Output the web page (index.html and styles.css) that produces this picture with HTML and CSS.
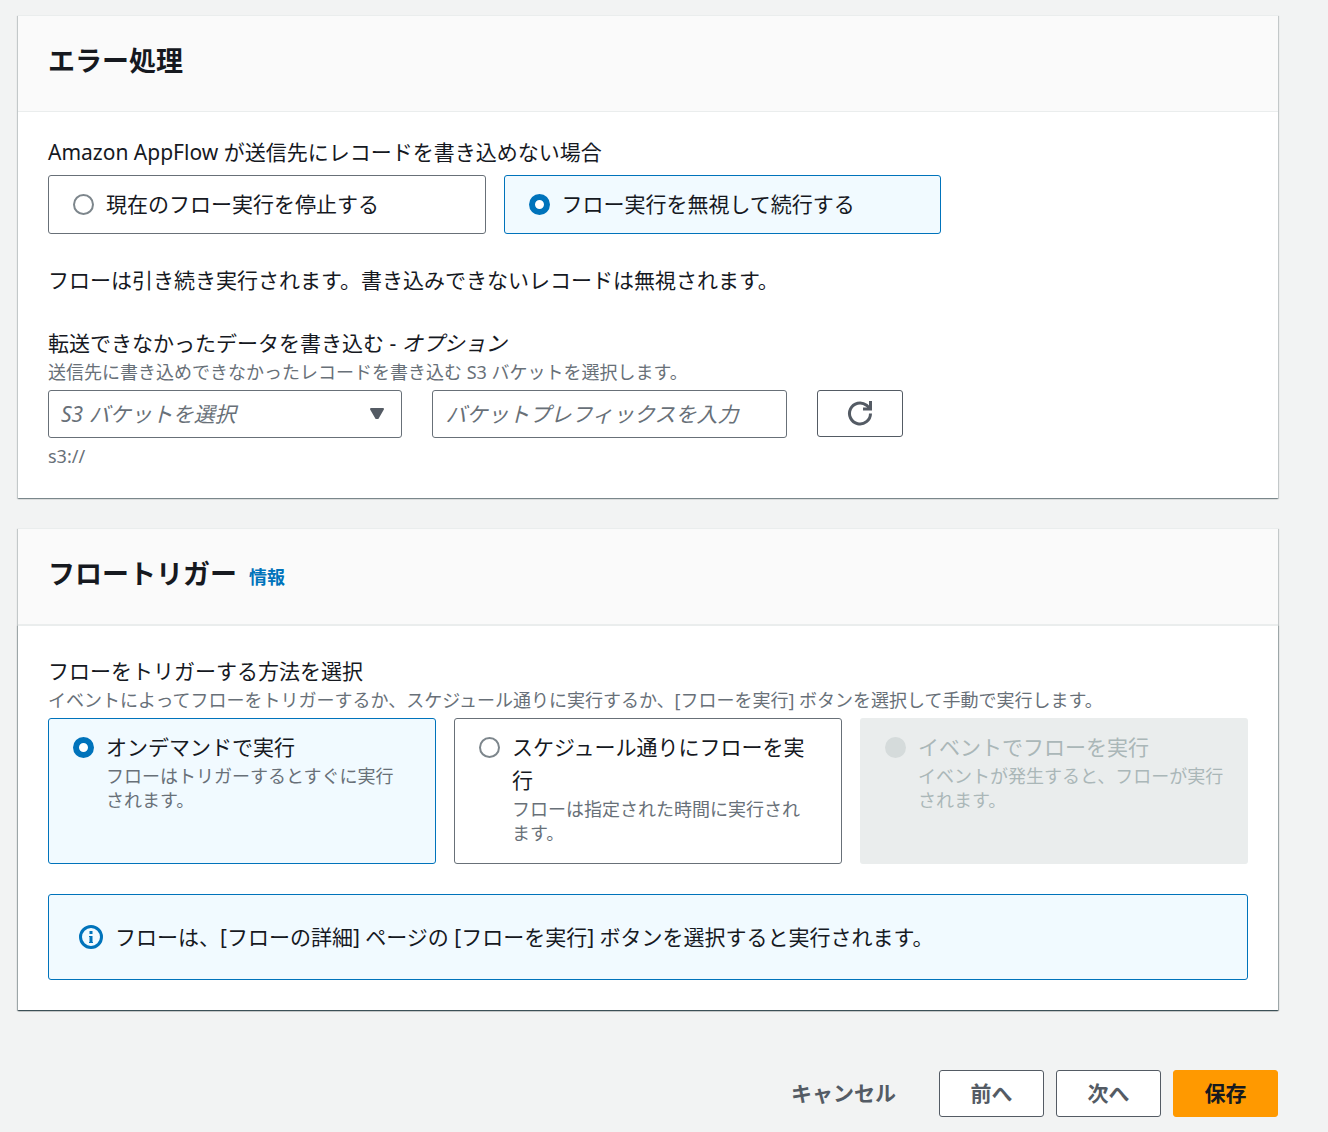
FILE: index.html
```html
<!DOCTYPE html>
<html lang="ja">
<head>
  <meta charset="UTF-8" />
  <meta name="viewport" content="width=device-width, initial-scale=1.0"/>
  <title>フローの設定</title>
  <link rel="stylesheet" href="styles.css">
</head>
<body>
  <form class="page">
    <section class="panel">
      <header class="panel-header">
        <h2>エラー処理</h2>
      </header>
      <div class="panel-body">
        <fieldset class="group narrow">
          <legend class="label">Amazon AppFlow が送信先にレコードを書き込めない場合</legend>
          <div class="tiles two">
            <label class="tile">
              <input type="radio" name="error">
              <span class="tile-title">現在のフロー実行を停止する</span>
            </label>
            <label class="tile selected">
              <input type="radio" name="error" checked>
              <span class="tile-title">フロー実行を無視して続行する</span>
            </label>
          </div>
        </fieldset>

        <p class="note">フローは引き続き実行されます。書き込みできないレコードは無視されます。</p>

        <div class="group narrow">
          <label class="label" for="bucket">転送できなかったデータを書き込む - <em>オプション</em></label>
          <p class="hint">送信先に書き込めできなかったレコードを書き込む S3 バケットを選択します。</p>
          <div class="fields">
            <div class="select">
              <select id="bucket">
                <option value="">S3 バケットを選択</option>
              </select>
              <svg class="arrow" width="16" height="14" viewBox="0 0 16 14" aria-hidden="true">
                <path d="M2 2h12l-5.200 9h-1.600z" fill="#545b64" stroke="#545b64" stroke-width="2" stroke-linejoin="round"/>
              </svg>
            </div>
            <input class="text" type="text" placeholder="バケットプレフィックスを入力" aria-label="バケットプレフィックス">
            <button class="btn refresh" type="button" aria-label="更新">
              <svg width="26" height="26" viewBox="0 0 26 26" fill="none" stroke="#545b64" stroke-width="3" aria-hidden="true">
                <path d="M23.500 12.500A10.500 10.500 0 1 1 19.500 4.200L22 6.500"/>
                <path d="M23.500 0v8H16"/>
                <path d="M19 8l4-4v4z" fill="#545b64" stroke-width="1"/>
              </svg>
            </button>
          </div>
          <p class="hint path">s3://</p>
        </div>
      </div>
    </section>

    <section class="panel">
      <header class="panel-header">
        <h2>フロートリガー</h2>
        <a class="info" href="#">情報</a>
      </header>
      <div class="panel-body nested">
        <fieldset class="group">
          <legend class="label">フローをトリガーする方法を選択</legend>
          <p class="hint">イベントによってフローをトリガーするか、スケジュール通りに実行するか、[フローを実行] ボタンを選択して手動で実行します。</p>
          <div class="tiles three">
            <label class="tile selected">
              <input type="radio" name="trigger" checked>
              <span class="tile-text">
                <span class="tile-title">オンデマンドで実行</span>
                <span class="tile-desc">フローはトリガーするとすぐに実行されます。</span>
              </span>
            </label>
            <label class="tile">
              <input type="radio" name="trigger">
              <span class="tile-text">
                <span class="tile-title">スケジュール通りにフローを実行</span>
                <span class="tile-desc">フローは指定された時間に実行されます。</span>
              </span>
            </label>
            <label class="tile disabled">
              <input type="radio" name="trigger" disabled>
              <span class="tile-text">
                <span class="tile-title">イベントでフローを実行</span>
                <span class="tile-desc">イベントが発生すると、フローが実行されます。</span>
              </span>
            </label>
          </div>
        </fieldset>

        <div class="alert">
          <svg width="24" height="24" viewBox="0 0 24 24" fill="none" stroke="#0073bb" aria-hidden="true">
            <circle cx="12" cy="12" r="10.500" stroke-width="3"/>
            <path d="M12 6v3M12 11v7" stroke-width="3"/>
            <path d="M10 11.500h2M10 17.500h4" stroke-width="1"/>
          </svg>
          <span>フローは、[フローの詳細] ページの [フローを実行] ボタンを選択すると実行されます。</span>
        </div>
      </div>
    </section>

    <div class="actions">
      <button class="btn link" type="button">キャンセル</button>
      <button class="btn" type="button">前へ</button>
      <button class="btn" type="button">次へ</button>
      <button class="btn primary" type="submit">保存</button>
    </div>
  </form>
</body>
</html>
```
FILE: styles.css
```css
* {
  box-sizing: border-box;
}

body {
  margin: 0;
  background-color: #f2f3f3;
  color: #16191f;
  font-family: "Noto Sans", "Noto Sans CJK JP", sans-serif;
  font-size: 21px;
  line-height: 33px;
}

h2, p, fieldset {
  margin: 0;
}

input, select, button {
  font: inherit;
  margin: 0;
}

.page {
  padding: 15px 50px 15px 18px;
}

.panel {
  margin-bottom: 30px;
  background-color: #fff;
  border-top: 1px solid #eaeded;
  box-shadow: 0 1px 1px rgba(0, 28, 36, 0.3), 1px 1px 1px rgba(0, 28, 36, 0.15), -1px 1px 1px rgba(0, 28, 36, 0.15);
}

.panel-header {
  display: flex;
  align-items: baseline;
  gap: 12px;
  padding: 27px 30px 32px;
  background-color: #fafafa;
  border-bottom: 1px solid #eaeded;
}

h2 {
  font-size: 27px;
  line-height: 36px;
}

.info {
  color: #0073bb;
  font-size: 18px;
  line-height: 24px;
  font-weight: bold;
  text-decoration: none;
}

.panel-body {
  display: flex;
  flex-direction: column;
  gap: 30px;
  padding: 24px 30px 30px;
}

.nested {
  padding-top: 29px;
  border-top: 1px solid #eaeded;
  box-shadow: 0 1px 1px rgba(0, 28, 36, 0.3), 1px 1px 1px rgba(0, 28, 36, 0.15), -1px 1px 1px rgba(0, 28, 36, 0.15);
}

.group {
  min-width: 0;
  padding: 0;
  border: 0;
}

.narrow {
  width: calc(75% - 7px);
}

.label {
  display: block;
  padding: 0;
}

.hint {
  color: #687078;
  font-size: 18px;
  line-height: 24px;
}

.path {
  margin-top: 6px;
}

/* radio tiles */
.tiles {
  display: grid;
  gap: 18px;
  margin-top: 6px;
}

.two {
  grid-template-columns: 1fr 1fr;
}

.three {
  grid-template-columns: 1fr 1fr 1fr;
}

.tile {
  display: flex;
  align-items: flex-start;
  gap: 12px;
  padding: 12px 24px;
  border: 1px solid #687078;
  border-radius: 3px;
}

.tile.selected {
  background-color: #f1faff;
  border-color: #0073bb;
}

.tile.disabled {
  padding: 13px 24px 13px 25px;
  background-color: #eaeded;
  border: 0;
  color: #aab7b8;
}

.tile input {
  appearance: none;
  flex: none;
  width: 21px;
  height: 21px;
  margin-top: 6px;
  background-color: #fff;
  border: 2px solid #7d868c;
  border-radius: 50%;
}

.tile input:checked {
  border: 6px solid #0073bb;
}

.tile input:disabled {
  background-color: #d5dbdb;
  border: 0;
}

.tile-title, .tile-desc {
  display: block;
}

.tile-desc {
  padding-bottom: 6px;
  color: #687078;
  font-size: 18px;
  line-height: 24px;
}

.disabled .tile-desc {
  color: #aab7b8;
}

/* bucket row */
.fields {
  display: grid;
  grid-template-columns: 20fr 20fr 7fr;
  gap: 30px;
  margin-top: 6px;
}

.select {
  position: relative;
}

.select select, .text {
  width: 100%;
  height: 48px;
  padding: 0 12px;
  background-color: #fff;
  border: 1px solid #687078;
  border-radius: 3px;
  color: #687078;
  font-style: italic;
}

.select select {
  appearance: none;
}

.text::placeholder {
  color: #687078;
}

.arrow {
  position: absolute;
  top: 17px;
  right: 17px;
  pointer-events: none;
}

.btn {
  height: 47px;
  min-width: 105px;
  padding: 0 30px;
  background-color: #fff;
  border: 1px solid #545b64;
  border-radius: 3px;
  color: #545b64;
  font-weight: bold;
  cursor: pointer;
}

.refresh {
  display: flex;
  align-items: center;
  justify-self: start;
  min-width: 86px;
  padding: 0 29px;
}

.link {
  background-color: transparent;
  border-color: transparent;
}

.primary {
  background-color: #ff9900;
  border-color: #ff9900;
  color: #16191f;
}

.alert {
  display: flex;
  align-items: center;
  gap: 12px;
  padding: 24px 30px;
  background-color: #f1faff;
  border: 1px solid #0073bb;
  border-radius: 3px;
  line-height: 36px;
}

.actions {
  display: flex;
  justify-content: flex-end;
  gap: 12px;
  margin-top: 60px;
}
```
